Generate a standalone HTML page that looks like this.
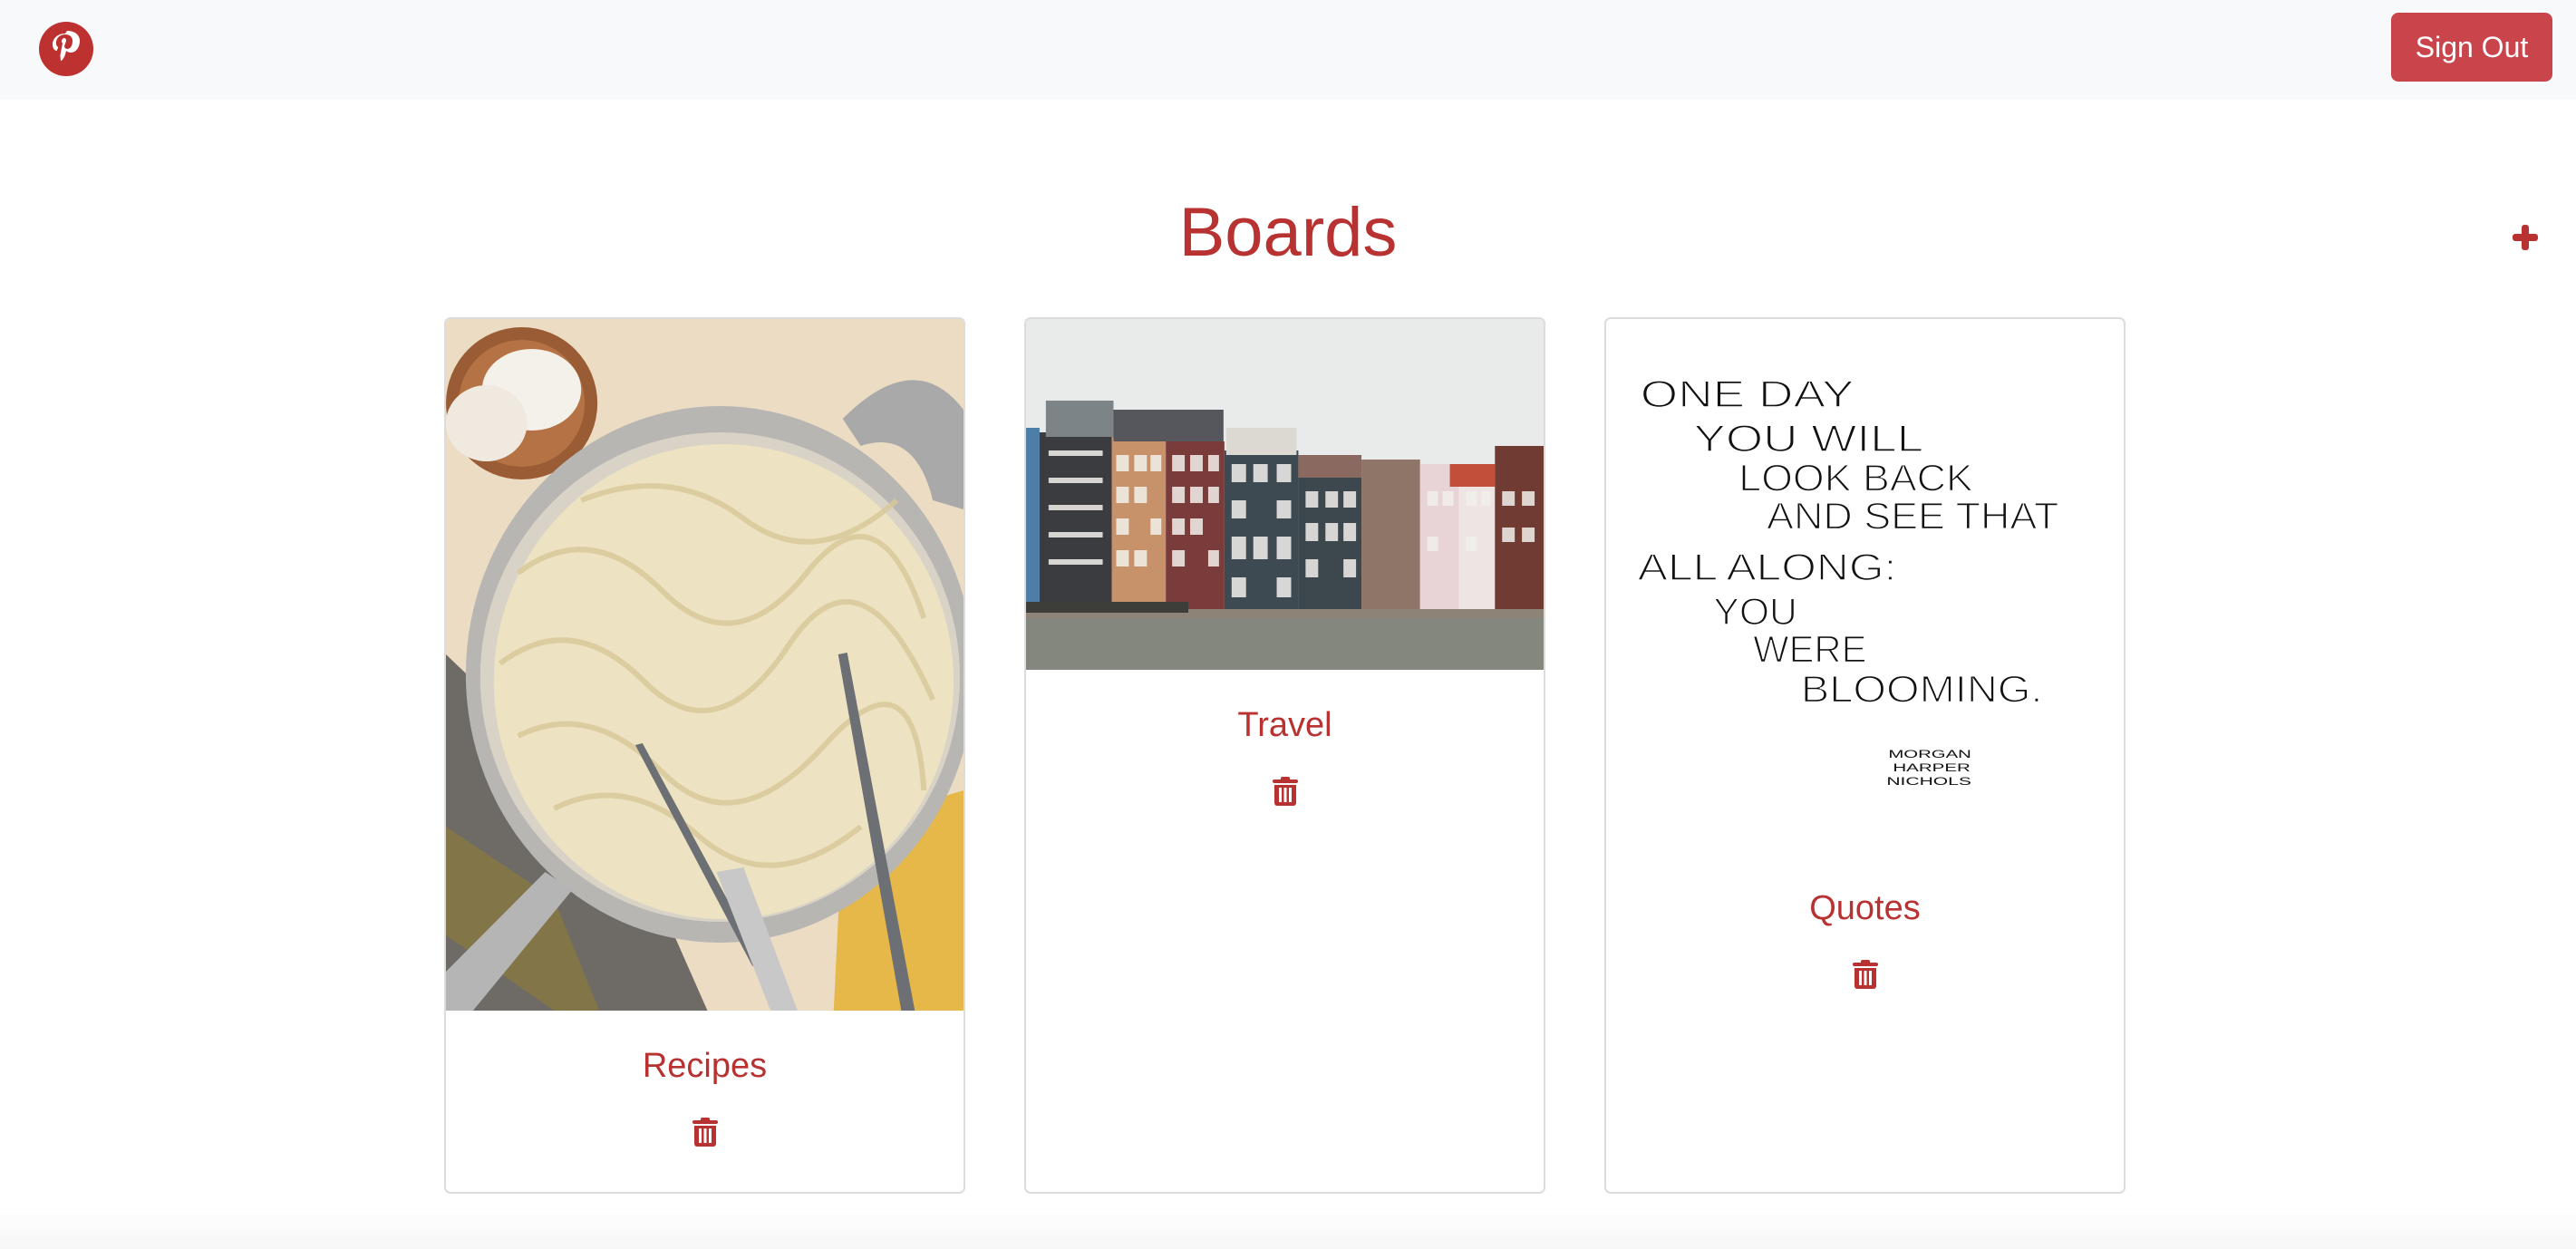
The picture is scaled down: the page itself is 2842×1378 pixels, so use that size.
<!DOCTYPE html>
<html><head><meta charset="utf-8"><style>
html,body{margin:0;padding:0;}
body{width:2842px;height:1378px;position:relative;overflow:hidden;background:#fff;font-family:"Liberation Sans",sans-serif;}
.nav{position:absolute;left:0;top:0;width:2842px;height:110px;background:#f8f9fa;}
.btn{position:absolute;left:2638px;top:14px;width:178px;height:76px;background:#c9444b;border-radius:8px;color:#fff;font-size:32px;line-height:76px;text-align:center;}
.title{position:absolute;left:0;width:2842px;top:219px;text-align:center;font-size:76px;line-height:76px;color:#b83232;}
.card{position:absolute;top:350px;width:571px;height:963px;border:2px solid #dcdcdc;border-radius:7px;overflow:hidden;background:#fff;}
.ct{position:absolute;left:0;width:100%;text-align:center;font-size:38px;line-height:40px;color:#b83232;}
.tr{position:absolute;left:50%;margin-left:-14px;}
.foot{position:absolute;left:0;top:1330px;width:2842px;height:48px;background:linear-gradient(#fff,#f7f7f7);}
</style></head><body>
<div class="nav">
<svg style="position:absolute;left:42px;top:23px" width="62" height="62" viewBox="0 0 62 62"><circle cx="31" cy="31" r="30" fill="#bd3230"/><path d="M30 14c-9 0-14 6-14 12 0 3 1 6 4 7 0 0 1 0 1-1l1-2c0-1 0-1-1-2-1-1-1-2-1-4 0-5 4-9 10-9 5 0 8 3 8 7 0 5-2 9-6 9-2 0-3-2-3-3l2-6c0-2-1-3-2-3-2 0-3 2-3 4l1 2-2 10c-1 3 0 8 0 9h1c1-1 3-4 4-7l1-4c1 1 3 2 5 2 6 0 10-6 10-13 0-6-5-11-14-11z" fill="#fff"/></svg>
<div class="btn">Sign Out</div>
</div>
<div class="title">Boards</div>
<svg style="position:absolute;left:2772px;top:248px" width="28" height="28" viewBox="0 0 28 28"><rect x="10" y="0" width="8" height="28" rx="3" fill="#b83232"/><rect x="0" y="10" width="28" height="8" rx="3" fill="#b83232"/></svg>

<div class="card" style="left:490px">
<svg width="571" height="763" viewBox="0 0 574 763" preserveAspectRatio="none" style="display:block">
<rect width="574" height="763" fill="#ecdcc4"/>
<path d="M0 370 L200 560 L290 763 L0 763Z" fill="#6e6a65"/>
<path d="M0 560 L120 640 L170 763 L120 763 L0 680Z" fill="#8a7a3a" opacity=".7"/>
<path d="M440 560 L574 520 L574 763 L430 763Z" fill="#e6b84a"/>
<circle cx="84" cy="93" r="84" fill="#9a5c34"/>
<circle cx="84" cy="93" r="70" fill="#b57244"/>
<ellipse cx="95" cy="78" rx="55" ry="45" fill="#f4f0ea"/>
<ellipse cx="45" cy="115" rx="45" ry="42" fill="#efe9df"/>
<path d="M440 110 Q520 30 574 100 L574 210 L540 200 Q520 120 460 140Z" fill="#a9a9a9"/>
<ellipse cx="304" cy="392" rx="282" ry="296" fill="#b7b6b3"/>
<ellipse cx="304" cy="395" rx="266" ry="270" fill="#d8d3c6"/>
<ellipse cx="308" cy="400" rx="255" ry="262" fill="#ede2c1"/>
<g stroke="#d9c89a" stroke-width="6" fill="none" opacity=".8">
<path d="M80 280 Q160 220 240 300 T400 280 T530 330"/><path d="M60 380 Q140 320 220 400 T380 360 T540 420"/><path d="M80 460 Q160 420 240 500 T420 470 T530 520"/><path d="M120 540 Q200 500 280 570 T460 560"/><path d="M150 200 Q250 160 330 220 T500 200"/>
</g>
<path d="M210 470 L218 468 L350 710 L340 714Z" fill="#6c6f73"/>
<path d="M435 370 L445 368 L520 763 L505 763Z" fill="#6c6f73"/>
<path d="M300 610 L330 605 L390 763 L360 763Z" fill="#c8c8c8"/>
<path d="M0 720 L110 610 L140 630 L30 763 L0 763Z" fill="#b5b5b5"/>
</svg>
<div class="ct" style="top:804px">Recipes</div>
<svg class="tr" style="top:881px" width="28" height="32" viewBox="0 0 28 32"><rect x="9" y="0" width="10" height="5" rx="2" fill="#b83232"/><rect x="0" y="3" width="28" height="4" rx="2" fill="#b83232"/><path d="M2 9h24v20a3 3 0 0 1-3 3H5a3 3 0 0 1-3-3z" fill="#b83232"/><rect x="7" y="12" width="3" height="16" fill="#fff"/><rect x="12.5" y="12" width="3" height="16" fill="#fff"/><rect x="18" y="12" width="3" height="16" fill="#fff"/></svg>
</div>

<div class="card" style="left:1130px">
<svg width="571" height="387" viewBox="0 0 574 387" preserveAspectRatio="none" style="display:block">
<rect width="574" height="387" fill="#e9eaea"/>
<rect x="0" y="120" width="15" height="200" fill="#4d7ea8"/>
<rect x="15" y="125" width="80" height="195" fill="#3a3c40"/><rect x="22" y="90" width="75" height="40" fill="#7c8488"/>
<rect x="95" y="130" width="60" height="190" fill="#c7926a"/>
<rect x="155" y="135" width="65" height="185" fill="#7a3b3b"/><rect x="97" y="100" width="122" height="35" fill="#55575c"/>
<rect x="220" y="145" width="82" height="175" fill="#3e4a52"/><rect x="222" y="120" width="78" height="30" fill="#dcd8d2"/>
<rect x="302" y="170" width="70" height="150" fill="#3d474e"/><rect x="302" y="150" width="70" height="25" fill="#8a6a60"/>
<rect x="372" y="155" width="65" height="165" fill="#8f7568"/>
<rect x="437" y="160" width="43" height="160" fill="#e8d4d6"/>
<rect x="480" y="160" width="40" height="160" fill="#efe4e4"/><rect x="470" y="160" width="50" height="25" fill="#c0503a"/>
<rect x="520" y="140" width="54" height="180" fill="#6f3b33"/>
<g fill="#f2f0ec" opacity=".85">
<rect x="25" y="145" width="60" height="6"/><rect x="25" y="175" width="60" height="6"/><rect x="25" y="205" width="60" height="6"/><rect x="25" y="235" width="60" height="6"/><rect x="25" y="265" width="60" height="6"/>
<rect x="100" y="150" width="14" height="18"/><rect x="120" y="150" width="14" height="18"/><rect x="138" y="150" width="12" height="18"/><rect x="100" y="185" width="14" height="18"/><rect x="120" y="185" width="14" height="18"/><rect x="100" y="220" width="14" height="18"/><rect x="138" y="220" width="12" height="18"/><rect x="100" y="255" width="14" height="18"/><rect x="120" y="255" width="14" height="18"/>
<rect x="162" y="150" width="14" height="18"/><rect x="182" y="150" width="14" height="18"/><rect x="202" y="150" width="12" height="18"/><rect x="162" y="185" width="14" height="18"/><rect x="182" y="185" width="14" height="18"/><rect x="202" y="185" width="12" height="18"/><rect x="162" y="220" width="14" height="18"/><rect x="182" y="220" width="14" height="18"/><rect x="162" y="255" width="14" height="18"/><rect x="202" y="255" width="12" height="18"/>
<rect x="228" y="160" width="16" height="20"/><rect x="252" y="160" width="16" height="20"/><rect x="278" y="160" width="16" height="20"/><rect x="228" y="200" width="16" height="20"/><rect x="278" y="200" width="16" height="20"/><rect x="228" y="240" width="16" height="25"/><rect x="252" y="240" width="16" height="25"/><rect x="278" y="240" width="16" height="25"/><rect x="228" y="285" width="16" height="22"/><rect x="278" y="285" width="16" height="22"/>
<rect x="310" y="190" width="14" height="18"/><rect x="332" y="190" width="14" height="18"/><rect x="352" y="190" width="14" height="18"/><rect x="310" y="225" width="14" height="20"/><rect x="332" y="225" width="14" height="20"/><rect x="352" y="225" width="14" height="20"/><rect x="310" y="265" width="14" height="20"/><rect x="352" y="265" width="14" height="20"/>
<rect x="445" y="190" width="12" height="16"/><rect x="462" y="190" width="12" height="16"/><rect x="488" y="190" width="12" height="16"/><rect x="505" y="190" width="10" height="16"/><rect x="528" y="190" width="14" height="16"/><rect x="550" y="190" width="14" height="16"/><rect x="528" y="230" width="14" height="16"/><rect x="550" y="230" width="14" height="16"/><rect x="445" y="240" width="12" height="16"/><rect x="488" y="240" width="12" height="16"/>
</g>
<rect x="0" y="320" width="574" height="67" fill="#8d8377"/>
<rect x="0" y="330" width="574" height="57" fill="#7f8a84" opacity=".6"/>
<rect x="0" y="312" width="180" height="12" fill="#3d3d3a"/>
</svg>
<div class="ct" style="top:428px">Travel</div>
<svg class="tr" style="top:505px" width="28" height="32" viewBox="0 0 28 32"><rect x="9" y="0" width="10" height="5" rx="2" fill="#b83232"/><rect x="0" y="3" width="28" height="4" rx="2" fill="#b83232"/><path d="M2 9h24v20a3 3 0 0 1-3 3H5a3 3 0 0 1-3-3z" fill="#b83232"/><rect x="7" y="12" width="3" height="16" fill="#fff"/><rect x="12.5" y="12" width="3" height="16" fill="#fff"/><rect x="18" y="12" width="3" height="16" fill="#fff"/></svg>
</div>

<div class="card" style="left:1770px">
<svg width="571" height="589" viewBox="0 0 574 589" style="display:block">
<g font-family="Liberation Sans, sans-serif" font-size="42" fill="#111" stroke="#fff" stroke-width="1.5">
<text x="38" y="96" textLength="237" lengthAdjust="spacingAndGlyphs">ONE DAY</text>
<text x="97" y="145" textLength="255" lengthAdjust="spacingAndGlyphs">YOU WILL</text>
<text x="147" y="189" textLength="260" lengthAdjust="spacingAndGlyphs">LOOK BACK</text>
<text x="178" y="231" textLength="324" lengthAdjust="spacingAndGlyphs">AND SEE THAT</text>
<text x="35" y="288" textLength="287" lengthAdjust="spacingAndGlyphs">ALL ALONG:</text>
<text x="119" y="337" textLength="93" lengthAdjust="spacingAndGlyphs">YOU</text>
<text x="163" y="379" textLength="126" lengthAdjust="spacingAndGlyphs">WERE</text>
<text x="216" y="423" textLength="268" lengthAdjust="spacingAndGlyphs">BLOOMING.</text>
</g>
<g font-family="Liberation Sans, sans-serif" font-size="12" fill="#111">
<text x="313" y="485" textLength="92" lengthAdjust="spacingAndGlyphs">MORGAN</text>
<text x="318" y="500" textLength="86" lengthAdjust="spacingAndGlyphs">HARPER</text>
<text x="311" y="515" textLength="94" lengthAdjust="spacingAndGlyphs">NICHOLS</text>
</g>
</svg>
<div class="ct" style="top:630px">Quotes</div>
<svg class="tr" style="top:707px" width="28" height="32" viewBox="0 0 28 32"><rect x="9" y="0" width="10" height="5" rx="2" fill="#b83232"/><rect x="0" y="3" width="28" height="4" rx="2" fill="#b83232"/><path d="M2 9h24v20a3 3 0 0 1-3 3H5a3 3 0 0 1-3-3z" fill="#b83232"/><rect x="7" y="12" width="3" height="16" fill="#fff"/><rect x="12.5" y="12" width="3" height="16" fill="#fff"/><rect x="18" y="12" width="3" height="16" fill="#fff"/></svg>
</div>
<div class="foot"></div>
</body></html>
